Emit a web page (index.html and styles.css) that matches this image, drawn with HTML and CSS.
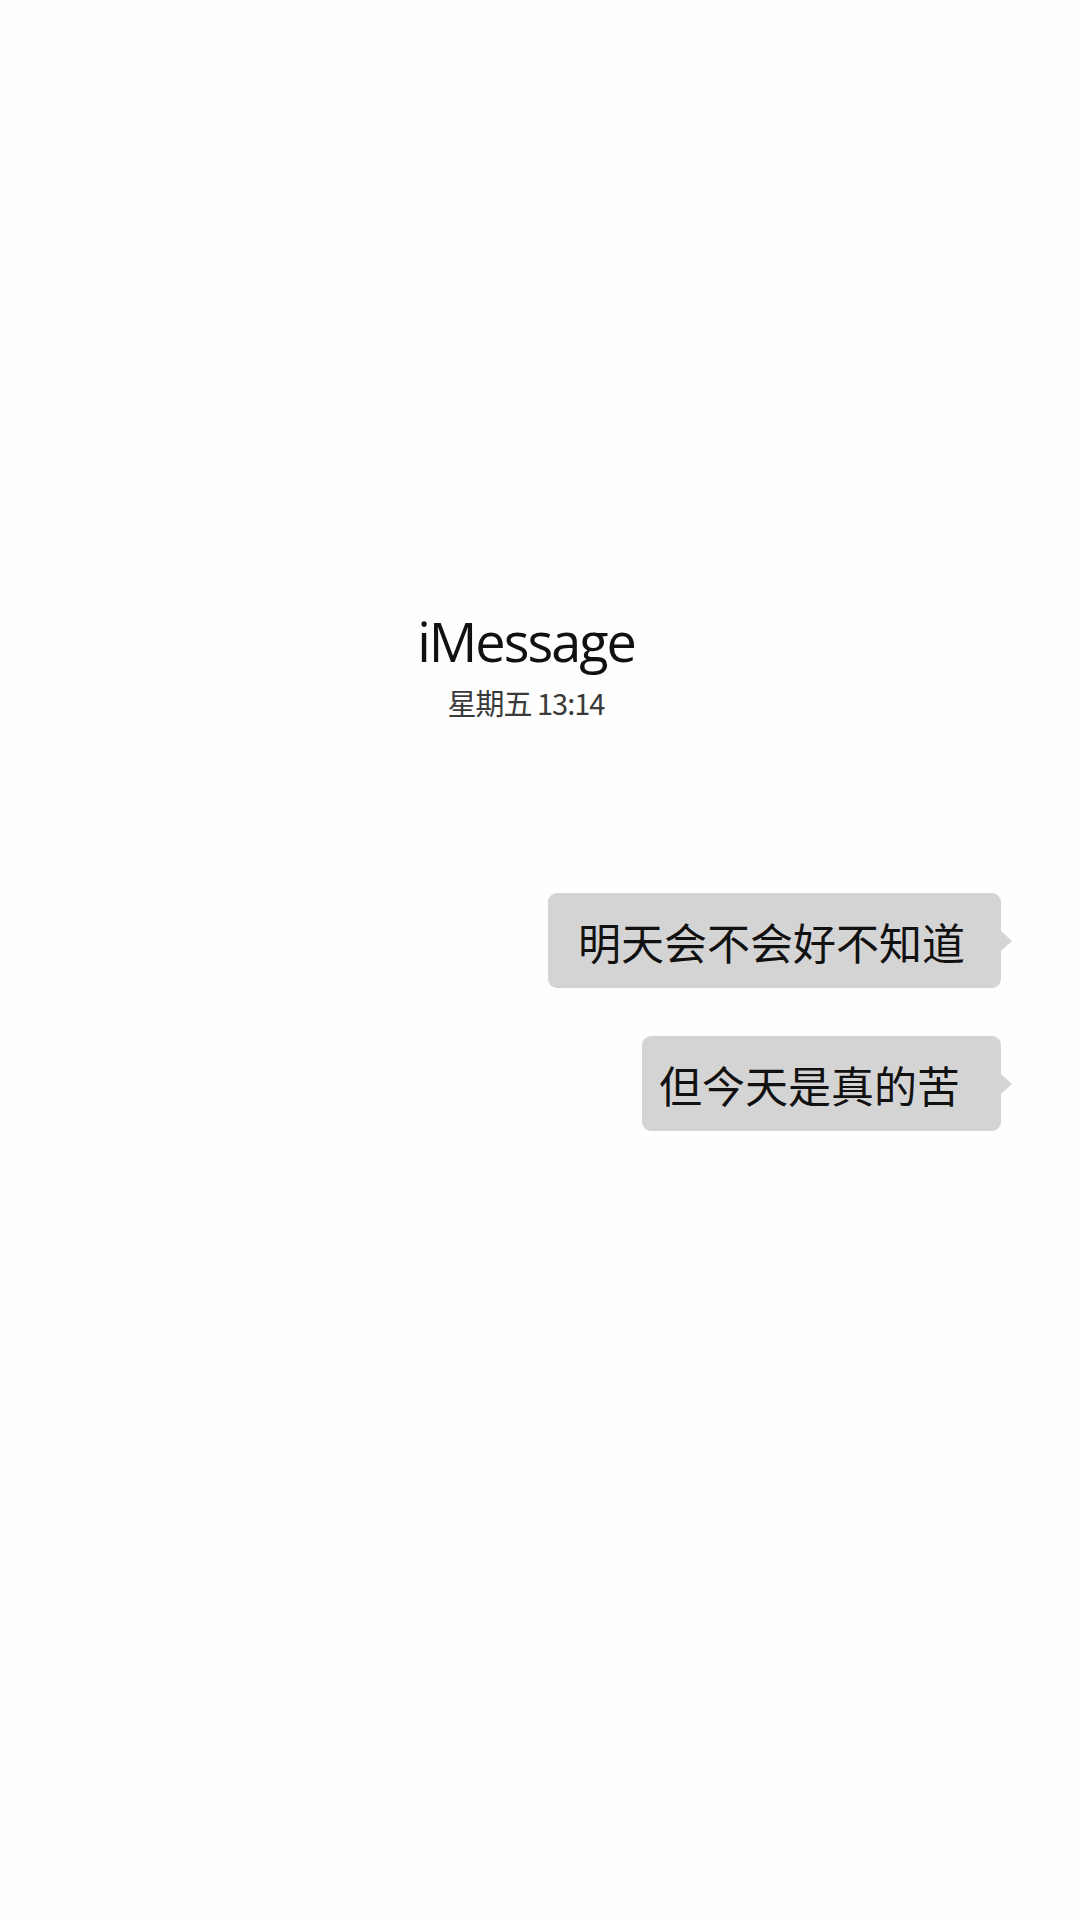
FILE: index.html
```html
<!DOCTYPE html>
<html lang="zh">
<head>
<meta charset="utf-8">
<link rel="stylesheet" href="styles.css">
</head>
<body>
<main class="screen">
  <header class="head">
    <div class="title">iMessage</div>
    <div class="date">星期五 13:14</div>
  </header>
  <section class="thread">
    <div class="bubble b1">明天会不会好不知道</div>
    <div class="bubble b2">但今天是真的苦</div>
  </section>
</main>
</body>
</html>
```

FILE: styles.css
```css
html, body {
  margin: 0;
  padding: 0;
  background: #fefefe;
}
.screen {
  width: 1080px;
  height: 1920px;
  display: flex;
  flex-direction: column;
  font-family: "Open Sans", "Noto Sans CJK SC", sans-serif;
}
.head {
  padding-top: 607px;
  padding-right: 28px;
  display: flex;
  flex-direction: column;
  align-items: center;
}
.title {
  font-size: 54px;
  line-height: 68px;
  color: #111;
  letter-spacing: -2px;
}
.date {
  font-family: "Noto Sans CJK SC", sans-serif;
  font-size: 29px;
  line-height: 34px;
  letter-spacing: -1px;
  color: #3a3a3a;
  margin-top: 10px;
}
.thread {
  margin-top: 174px;
  display: flex;
  flex-direction: column;
  align-items: flex-end;
  gap: 48px;
  padding-right: 79px;
}
.bubble {
  position: relative;
  background: #d4d4d4;
  border-radius: 9px;
  height: 95px;
  display: flex;
  align-items: center;
  font-family: "Noto Sans CJK SC", sans-serif;
  font-size: 43px;
  color: #111;
  box-sizing: border-box;
  white-space: nowrap;
}
.bubble::after {
  content: "";
  position: absolute;
  right: -11px;
  top: 50%;
  margin-top: -10px;
  border-left: 11px solid #d4d4d4;
  border-top: 10px solid transparent;
  border-bottom: 10px solid transparent;
}
.b1 {
  padding: 0 36px 0 30px;
}
.b2 {
  padding: 0 41px 0 17px;
}
```
